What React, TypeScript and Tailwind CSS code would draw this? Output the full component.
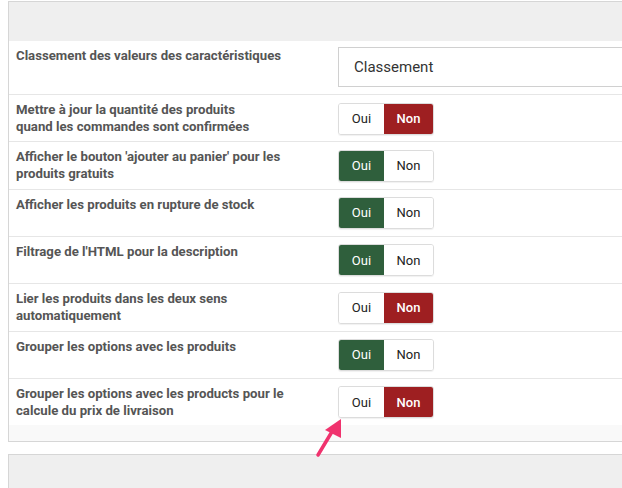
import React from "react";

type Row = { label: string[]; value: "oui" | "non" };

const rows: Row[] = [
  { label: ["Mettre à jour la quantité des produits", "quand les commandes sont confirmées"], value: "non" },
  { label: ["Afficher le bouton 'ajouter au panier' pour les", "produits gratuits"], value: "oui" },
  { label: ["Afficher les produits en rupture de stock"], value: "oui" },
  { label: ["Filtrage de l'HTML pour la description"], value: "oui" },
  { label: ["Lier les produits dans les deux sens", "automatiquement"], value: "non" },
  { label: ["Grouper les options avec les produits"], value: "oui" },
];

function Toggle({ value }: { value: "oui" | "non" }) {
  return (
    <div className="flex h-[32px] w-[96px] rounded-[3px] border border-[#dcdcdc] shadow-[0_1px_1px_rgba(0,0,0,0.06)] overflow-hidden text-[13px]">
      <div
        className={
          value === "oui"
            ? "w-[45px] flex items-center justify-center bg-[#2f5f3c] text-white"
            : "w-[45px] flex items-center justify-center bg-white text-[#222]"
        }
      >
        Oui
      </div>
      <div
        className={
          value === "non"
            ? "flex-1 flex items-center justify-center bg-[#9e1f21] text-white font-medium"
            : "flex-1 flex items-center justify-center bg-white text-[#222]"
        }
      >
        Non
      </div>
    </div>
  );
}

function Label({ lines }: { lines: string[] }) {
  return (
    <div className="w-[329px] pl-[7px] pt-[6px] text-[13.2px] leading-[17px] font-bold text-[#555]">
      {lines.map((l, i) => (
        <div key={i}>{l}</div>
      ))}
    </div>
  );
}

export default function App() {
  return (
    <div
      className="relative w-[622px] h-[488px] overflow-hidden bg-white pl-[8px] pt-[1px]"
      style={{ fontFamily: "Roboto, 'Liberation Sans', sans-serif" }}
    >
      <div className="w-[660px] border border-[#d6d6d6]">
        <div className="h-[39px] bg-[#efefef]" />
        <div className="flex h-[54px] border-b border-[#e6e6e6]">
          <Label lines={["Classement des valeurs des caractéristiques"]} />
          <div className="pt-[6px]">
            <div className="h-[40px] w-[320px] border border-[#d0d0d0] flex items-center pl-[15px] text-[15px] text-[#333]">
              Classement
            </div>
          </div>
        </div>
        {rows.map((r, i) => (
          <div key={i} className="flex h-[47.34px] border-b border-[#e6e6e6]">
            <Label lines={r.label} />
            <div className="pt-[7.5px]">
              <Toggle value={r.value} />
            </div>
          </div>
        ))}
        <div className="flex h-[46px]">
          <Label lines={["Grouper les options avec les products pour le", "calcule du prix de livraison"]} />
          <div className="pt-[7.5px]">
            <Toggle value="non" />
          </div>
        </div>
        <div className="h-[16px] bg-[#f9f9f9]" />
      </div>
      <div className="mt-[12px] w-[660px] h-[60px] border border-[#d6d6d6] bg-[#efefef]" />
      <svg
        className="absolute left-[310px] top-[415px]"
        width="40"
        height="45"
        viewBox="0 0 40 45"
      >
        <line x1="8" y1="40" x2="23" y2="15" stroke="#f0336e" strokeWidth="3.5" strokeLinecap="round" />
        <polygon points="31,4 31,23 15,15" fill="#f0336e" />
      </svg>
    </div>
  );
}
